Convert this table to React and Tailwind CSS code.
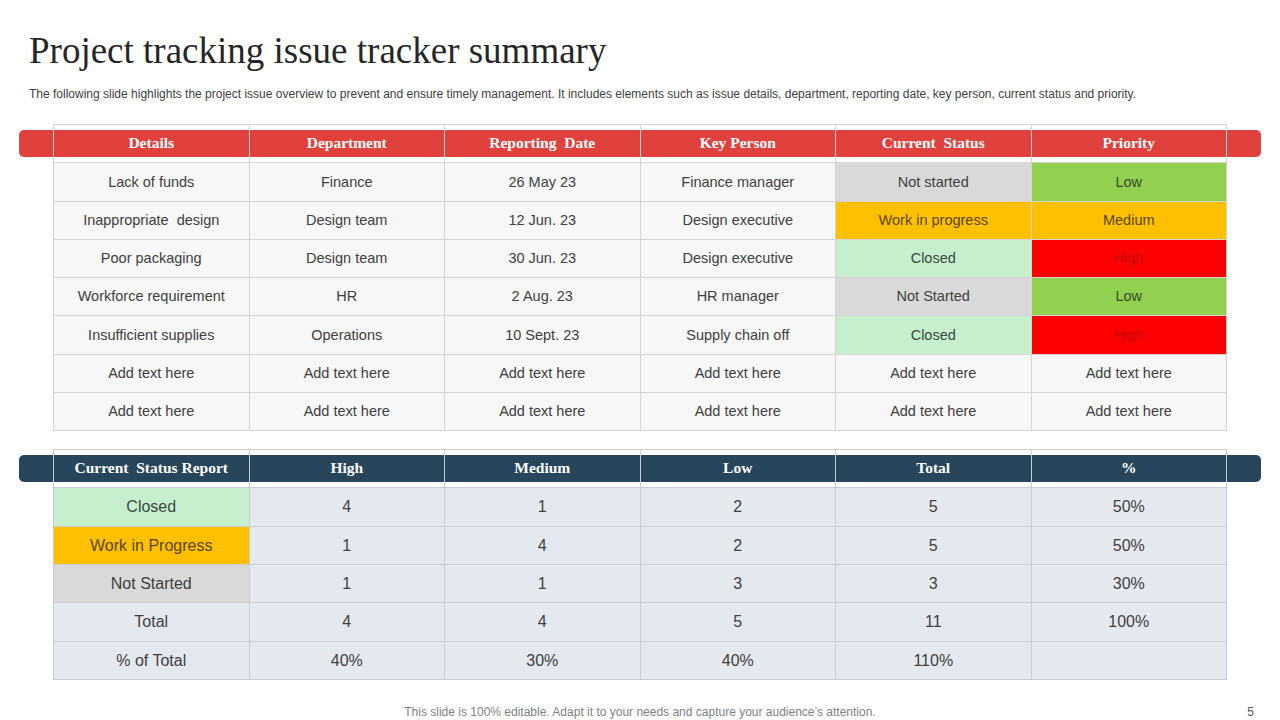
import React from "react";

const t1 = [
  ["Lack of funds", "Finance", "26 May 23", "Finance manager", ["Not started", "ns"], ["Low", "low"]],
  ["Inappropriate  design", "Design team", "12 Jun. 23", "Design executive", ["Work in progress", "wip"], ["Medium", "med"]],
  ["Poor packaging", "Design team", "30 Jun. 23", "Design executive", ["Closed", "cl"], ["High", "high"]],
  ["Workforce requirement", "HR", "2 Aug. 23", "HR manager", ["Not Started", "ns"], ["Low", "low"]],
  ["Insufficient supplies", "Operations", "10 Sept. 23", "Supply chain off", ["Closed", "cl"], ["High", "high"]],
  ["Add text here", "Add text here", "Add text here", "Add text here", ["Add text here", ""], ["Add text here", ""]],
  ["Add text here", "Add text here", "Add text here", "Add text here", ["Add text here", ""], ["Add text here", ""]],
];

const tone = {
  ns: "bg-[#d9d9d9] text-[#404040]",
  wip: "bg-[#ffc000] text-[#5a4500]",
  cl: "bg-[#c6efce] text-[#3a4a3e]",
  low: "bg-[#92d050] text-[#3b4a2a]",
  med: "bg-[#ffc000] text-[#5a4500]",
  high: "bg-[#ff0000] text-[#c00000]",
  "": "bg-[#f7f7f7] text-[#404040]",
};

const t2 = [
  [["Closed", "cl"], "4", "1", "2", "5", "50%"],
  [["Work in Progress", "wip"], "1", "4", "2", "5", "50%"],
  [["Not Started", "ns"], "1", "1", "3", "3", "30%"],
  [["Total", ""], "4", "4", "5", "11", "100%"],
  [["% of Total", ""], "40%", "30%", "40%", "110%", ""],
];

const tone2 = {
  cl: "bg-[#c6efce] text-[#3a4a3e]",
  wip: "bg-[#ffc000] text-[#5a4500]",
  ns: "bg-[#d9d9d9] text-[#404040]",
  "": "bg-[#e4e9f0] text-[#404040]",
};

function Header({ cols, bar, line }) {
  return (
    <div className="relative px-[19px]">
      <div className={`absolute left-[19px] right-[19px] top-[6px] h-[27px] rounded-[5px] ${bar}`} />
      <div className={`relative mx-[34px] grid grid-cols-6 border-t border-l ${line}`}>
        {cols.map((c, i) => (
          <div
            key={i}
            className={`h-[38.25px] flex items-center justify-center border-r border-b ${line} font-['Liberation_Serif',serif] font-bold text-[15.5px] text-white whitespace-pre pb-[2px]`}
          >
            {c}
          </div>
        ))}
      </div>
    </div>
  );
}

export default function App() {
  return (
    <div className="w-[1280px] h-[720px] bg-white overflow-hidden font-['Liberation_Sans',Arial,sans-serif] flex flex-col">
      <div className="pl-[29px] pt-[31px]">
        <h1 className="font-['Liberation_Serif',serif] text-[37px] leading-[40px] text-[#262626]">
          Project tracking issue tracker summary
        </h1>
        <p className="mt-[16px] text-[12px] leading-[14px] text-[#404040]">
          The following slide highlights the project issue overview to prevent and ensure timely management. It includes elements such as issue details, department, reporting date, key person, current status and priority.
        </p>
      </div>

      <div className="mt-[23px]">
        <Header
          cols={["Details", "Department", "Reporting  Date", "Key Person", "Current  Status", "Priority"]}
          bar="bg-[#e0413d]"
          line="border-[#d4d4d4]"
        />
        <div className="mx-[53px] grid grid-cols-6 border-l border-[#d4d4d4]">
          {t1.map((r, ri) =>
            r.map((c, ci) => {
              const [txt, k] = Array.isArray(c) ? c : [c, ""];
              return (
                <div
                  key={ri + "-" + ci}
                  className={`h-[38.25px] flex items-center justify-center border-r border-b border-[#d4d4d4] text-[14.5px] whitespace-pre pt-[1px] ${tone[k]}`}
                >
                  {txt}
                </div>
              );
            })
          )}
        </div>
      </div>

      <div className="mt-[18px]">
        <Header
          cols={["Current  Status Report", "High", "Medium", "Low", "Total", "%"]}
          bar="bg-[#27465b]"
          line="border-[#c9ccd0]"
        />
        <div className="mx-[53px] grid grid-cols-6 border-l border-[#c9ccd0]">
          {t2.map((r, ri) =>
            r.map((c, ci) => {
              const [txt, k] = Array.isArray(c) ? c : [c, ""];
              return (
                <div
                  key={ri + "-" + ci}
                  className={`h-[38.33px] flex items-center justify-center border-r border-b border-[#c9ccd0] text-[16px] pt-[1px] ${tone2[k]}`}
                >
                  {txt}
                </div>
              );
            })
          )}
        </div>
      </div>

      <div className="mt-[25px] grid grid-cols-[1fr_auto_1fr] items-center text-[12px] leading-[14px] text-[#7f7f7f]">
        <div />
        <div>
          This slide is 100% editable. Adapt it to your needs and capture your audience’s attention.
        </div>
        <div className="justify-self-end pr-[26px] text-[12px] text-[#595959]">5</div>
      </div>
    </div>
  );
}
